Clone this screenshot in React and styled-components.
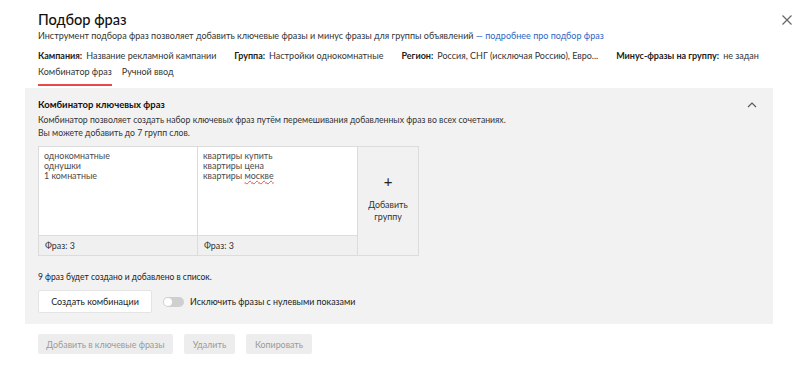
import React from "react";
import styled, { createGlobalStyle } from "styled-components";

const Global = createGlobalStyle`
  html, body { margin: 0; padding: 0; background: #fff; }
  body { font-family: Lato, "Liberation Sans", sans-serif; color: #222; }
  * { box-sizing: border-box; }
`;

const Page = styled.div`
  width: 807px;
  height: 366px;
  padding-top: 10px;
  overflow: hidden;
`;

const Header = styled.div`
  padding: 0 34px 0 38px;
`;

const TitleRow = styled.div`
  display: flex;
  justify-content: space-between;
  align-items: center;
  height: 20px;
`;

const Title = styled.h1`
  margin: 0;
  font-size: 14.6px;
  line-height: 20px;
  font-weight: 500;
  color: #111;
`;

const CloseBtn = styled.button`
  border: 0;
  background: none;
  padding: 0;
  width: 12px;
  height: 12px;
  margin-right: -20px;
  display: flex;
  cursor: pointer;
`;

const Desc = styled.p`
  margin: 0;
  font-size: 9px;
  line-height: 12px;
  color: #333;
`;

const Link = styled.a`
  color: #2a66c4;
  text-decoration: none;
`;

const Meta = styled.div`
  display: flex;
  gap: 18px;
  margin-top: 8px;
  font-size: 9px;
  line-height: 12px;
  color: #333;
  white-space: nowrap;
`;

const MetaItem = styled.span`
  b { font-weight: 700; color: #222; margin-right: 4px; }
`;

const Tabs = styled.div`
  display: flex;
  gap: 10px;
  margin-top: 2px;
`;

const Tab = styled.div`
  padding: 2px 0 6px;
  font-size: 9px;
  line-height: 12px;
  color: #333;
  border-bottom: 2px solid ${(p) => (p.$active ? "#e84a4a" : "transparent")};
`;

const Panel = styled.section`
  margin: 2px 34px 0 25px;
  background: #f2f2f2;
  padding: 10px 13px 11px;
`;

const PanelHead = styled.div`
  display: flex;
  justify-content: space-between;
  align-items: center;
`;

const PanelTitle = styled.h2`
  margin: 0;
  font-size: 9.5px;
  line-height: 14px;
  font-weight: 700;
  color: #111;
`;

const Chevron = styled.span`
  display: flex;
  margin-right: 3px;
`;

const PanelDesc = styled.p`
  margin: 2px 0 0;
  font-size: 8.7px;
  line-height: 12.5px;
  color: #333;
`;

const Grid = styled.div`
  display: grid;
  grid-template-columns: 160px 160px 61px;
  margin-top: 7px;
  width: 381px;
`;

const Col = styled.div`
  display: flex;
  flex-direction: column;
  height: 110px;
  border: 1px solid #dcdcdc;
  border-left-width: ${(p) => (p.$first ? "1px" : "0")};
  background: #fff;
`;

const Words = styled.div`
  flex: 1;
  padding: 4px 5px;
  font-size: 8.9px;
  line-height: 10px;
  color: #4a4a4a;
`;

const Line = styled.div`
  white-space: nowrap;
`;

const Spell = styled.span`
  text-decoration: underline wavy #e05050;
  text-decoration-thickness: 1px;
`;

const ColFooter = styled.div`
  height: 20px;
  border-top: 1px solid #dcdcdc;
  background: #f0f0f0;
  padding: 0 6px;
  font-size: 8.9px;
  line-height: 19px;
  color: #333;
`;

const AddCol = styled.button`
  height: 110px;
  border: 1px solid #dcdcdc;
  border-left: 0;
  background: #f1f1f1;
  font-family: inherit;
  font-size: 8.9px;
  line-height: 12px;
  color: #333;
  display: flex;
  flex-direction: column;
  align-items: center;
  padding: 27px 0 0;
  cursor: pointer;
`;

const Plus = styled.span`
  font-size: 15px;
  line-height: 14px;
  color: #222;
  margin-bottom: 11px;
`;

const Note = styled.p`
  margin: 15px 0 0;
  font-size: 8.5px;
  line-height: 12px;
  color: #222;
`;

const Actions = styled.div`
  display: flex;
  align-items: center;
  gap: 11px;
  margin-top: 7px;
`;

const WhiteBtn = styled.button`
  height: 23px;
  width: 114px;
  border: 1px solid #e4e4e4;
  border-radius: 2px;
  background: #fff;
  font-family: inherit;
  font-size: 9px;
  color: #222;
  padding: 0;
`;

const Toggle = styled.label`
  display: flex;
  align-items: center;
  gap: 6px;
  font-size: 8.9px;
  color: #222;
`;

const Track = styled.span`
  position: relative;
  width: 21px;
  height: 10px;
  border-radius: 5px;
  background: #cfcfcf;
  &::after {
    content: "";
    position: absolute;
    left: 1px;
    top: 1px;
    width: 8px;
    height: 8px;
    border-radius: 50%;
    background: #fff;
  }
`;

const Bottom = styled.div`
  display: flex;
  gap: 11px;
  padding: 10px 0 0 38px;
`;

const GrayBtn = styled.button`
  height: 20px;
  width: ${(p) => p.$w}px;
  border: 0;
  border-radius: 2px;
  background: #ededed;
  font-family: inherit;
  font-size: 8.9px;
  color: #9a9a9a;
  padding: 0;
`;

export default function App() {
  return (
    <Page>
      <Global />
      <Header>
        <TitleRow>
          <Title>Подбор фраз</Title>
          <CloseBtn aria-label="Закрыть">
            <svg width="12" height="12" viewBox="0 0 12 12">
              <path d="M1.5 1.5 L10.5 10.5 M10.5 1.5 L1.5 10.5" stroke="#666" strokeWidth="1.2" />
            </svg>
          </CloseBtn>
        </TitleRow>
        <Desc>
          Инструмент подбора фраз позволяет добавить ключевые фразы и минус фразы для группы объявлений{" "}
          <Link href="#">— подробнее про подбор фраз</Link>
        </Desc>
        <Meta>
          <MetaItem><b>Кампания:</b>Название рекламной кампании</MetaItem>
          <MetaItem><b>Группа:</b>Настройки однокомнатные</MetaItem>
          <MetaItem><b>Регион:</b>Россия, СНГ (исключая Россию), Евро...</MetaItem>
          <MetaItem><b>Минус-фразы на группу:</b>не задан</MetaItem>
        </Meta>
        <Tabs>
          <Tab $active>Комбинатор фраз</Tab>
          <Tab>Ручной ввод</Tab>
        </Tabs>
      </Header>
      <Panel>
        <PanelHead>
          <PanelTitle>Комбинатор ключевых фраз</PanelTitle>
          <Chevron>
            <svg width="10" height="6" viewBox="0 0 10 6">
              <path d="M1 5 L5 1 L9 5" fill="none" stroke="#555" strokeWidth="1.1" />
            </svg>
          </Chevron>
        </PanelHead>
        <PanelDesc>
          Комбинатор позволяет создать набор ключевых фраз путём перемешивания добавленных фраз во всех сочетаниях.
          <br />
          Вы можете добавить до 7 групп слов.
        </PanelDesc>
        <Grid>
          <Col $first>
            <Words>
              <Line>однокомнатные</Line>
              <Line>однушки</Line>
              <Line>1 комнатные</Line>
            </Words>
            <ColFooter>Фраз: 3</ColFooter>
          </Col>
          <Col>
            <Words>
              <Line>квартиры купить</Line>
              <Line>квартиры цена</Line>
              <Line>
                квартиры <Spell>москве</Spell>
              </Line>
            </Words>
            <ColFooter>Фраз: 3</ColFooter>
          </Col>
          <AddCol>
            <Plus>+</Plus>
            Добавить
            <br />
            группу
          </AddCol>
        </Grid>
        <Note>9 фраз будет создано и добавлено в список.</Note>
        <Actions>
          <WhiteBtn>Создать комбинации</WhiteBtn>
          <Toggle>
            <Track />
            Исключить фразы с нулевыми показами
          </Toggle>
        </Actions>
      </Panel>
      <Bottom>
        <GrayBtn $w={135}>Добавить в ключевые фразы</GrayBtn>
        <GrayBtn $w={51}>Удалить</GrayBtn>
        <GrayBtn $w={66}>Копировать</GrayBtn>
      </Bottom>
    </Page>
  );
}
